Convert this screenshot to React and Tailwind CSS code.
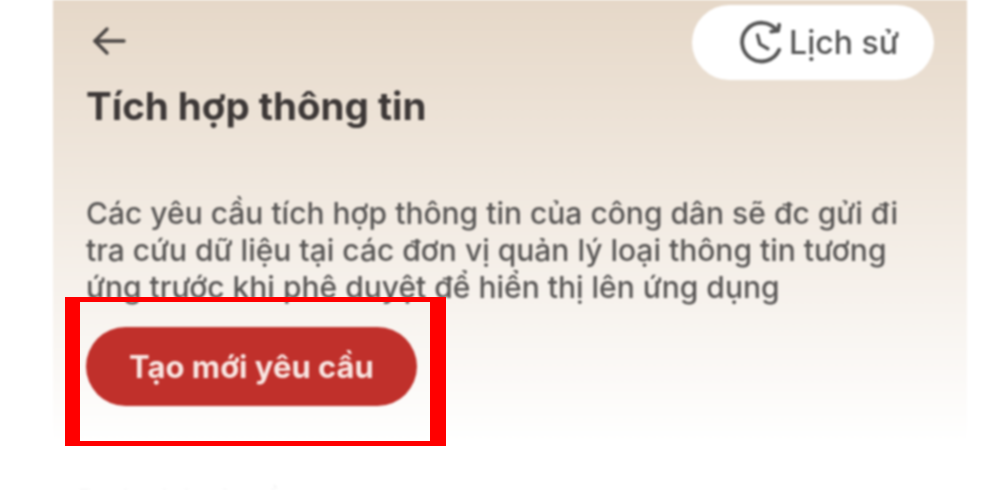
export default function App() {
  return (
    <div className="h-[490px] w-[1000px] overflow-hidden bg-white font-['Inter',sans-serif]">
      <div className="relative ml-[53px] h-[490px] w-[914px] overflow-hidden bg-gradient-to-b from-[#e6d8c8] to-white to-90% blur-[0.9px]">
        <div className="flex items-start justify-between pl-[39px] pr-[33px] pt-[5px]">
          <svg className="mt-[19px] h-[34px] w-[36px]" viewBox="0 0 36 34" fill="none" stroke="#4a4644" strokeWidth="3.4" strokeLinecap="round" strokeLinejoin="round">
            <path d="M3 17 H32" />
            <path d="M15 5 L3 17 L15 29" />
          </svg>
          <div className="flex h-[75px] w-[242px] items-center justify-center gap-[3px] rounded-full bg-white pl-[9px] text-[32px] font-medium text-[#555]">
            <svg className="h-[50px] w-[50px]" viewBox="0 0 44 44" fill="none" stroke="#555" strokeWidth="3.4" strokeLinecap="round" strokeLinejoin="round">
              <path d="M36 11 A17 17 0 1 0 38 28" />
              <path d="M37 11 L31 12" />
              <path d="M37 11 L38 6" />
              <path d="M19 15 L21 23 L28 27" strokeWidth="3" />
            </svg>
            <span>Lịch sử</span>
          </div>
        </div>
        <h1 className="mt-[4px] pl-[33px] text-[38.5px] font-bold leading-[44px] text-[#3d3837]">Tích hợp thông tin</h1>
        <p className="mt-[67px] w-[860px] pl-[33px] text-[30px] font-medium leading-[37px] text-[#595756]">
          Các yêu cầu tích hợp thông tin của công dân sẽ đc gửi đi
          <br />
          tra cứu dữ liệu tại các đơn vị quản lý loại thông tin tương
          <br />
          ứng trước khi phê duyệt để hiển thị lên ứng dụng
        </p>
        <button className="ml-[33px] mt-[21px] flex h-[79px] w-[331px] items-center justify-center rounded-full bg-[#c0302b] pt-[2px] text-[31px] font-bold text-[#f8e6e2]">
          Tạo mới yêu cầu
        </button>
        <p className="mt-[75px] pl-[25px] text-[24px] text-[#f3f3f3]">Danh sách yêu cầu</p>
      </div>
      <div className="pointer-events-none absolute left-[65px] top-[297px] h-[149px] w-[381px] border-y-[5px] border-l-[15px] border-r-[16px] border-[#ff0000] blur-[0.4px]" />
    </div>
  );
}
